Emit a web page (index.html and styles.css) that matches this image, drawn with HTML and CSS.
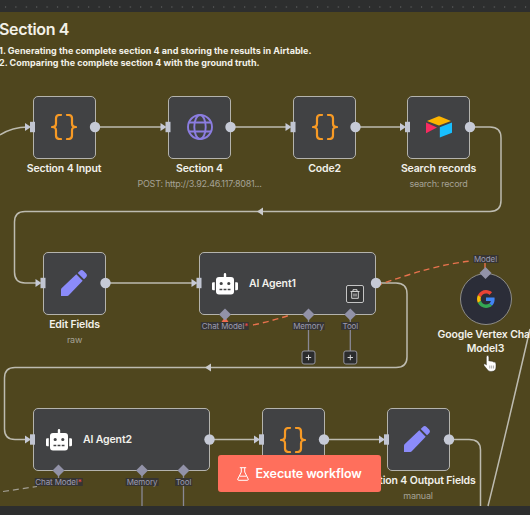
FILE: index.html
```html
<!DOCTYPE html>
<html lang="en">
<head>
<meta charset="utf-8">
<title>Workflow canvas</title>
<link rel="stylesheet" href="styles.css">
</head>
<body>
<svg class="defs" width="0" height="0" aria-hidden="true">
  <defs>
    <symbol id="braces" viewBox="0 0 26 26"><path d="M10 1H8.500Q5 1 5 4.500V9.500Q5 13 1 13Q5 13 5 16.500V21.500Q5 25 8.500 25H10M16 1H17.500Q21 1 21 4.500V9.500Q21 13 25 13Q21 13 21 16.500V21.500Q21 25 17.500 25H16" fill="none" stroke="#f79a25" stroke-width="2.200" stroke-linecap="round" stroke-linejoin="round"/></symbol>
    <symbol id="globe" viewBox="0 0 26 26"><g fill="none" stroke="#8b7de0" stroke-width="1.900"><circle cx="13" cy="13" r="12"/><ellipse cx="13" cy="13" rx="5.700" ry="12"/><path d="M2 8.500H24M2 17.500H24"/></g></symbol>
    <symbol id="pencil" viewBox="0 0 26 26"><path fill="#8b8bfa" d="M0 26V19.800Q0 18.800.8 18L15.300 4.300 21.700 10.700 8 25.100Q7.200 26 6.200 26ZM16.700 3 18.800.9Q20.700-.8 22.600.9L25.100 3.400Q26.800 5.300 25.100 7.200L23 9.300Z"/></symbol>
    <symbol id="robot" viewBox="0 0 26 22"><path fill="#fff" fill-rule="evenodd" d="M13 0Q14.200 0 14.200 1.200V4H19Q22 4 22 7V18.500Q22 21.500 19 21.500H7Q4 21.500 4 18.500V7Q4 4 7 4H11.800V1.200Q11.800 0 13 0ZM7.600 10.500a1.600 1.600 0 1 0 3.200 0a1.600 1.600 0 1 0-3.200 0M15.200 10.500a1.600 1.600 0 1 0 3.200 0a1.600 1.600 0 1 0-3.200 0M7.500 15.800V17.200H10.300V15.800ZM11.600 15.800V17.200H14.400V15.800ZM15.700 15.800V17.200H18.500V15.800ZM2.800 9.300V17.300H1.300Q0 17.300 0 16V10.600Q0 9.300 1.300 9.300ZM23.200 9.300H24.700Q26 9.300 26 10.600V16Q26 17.300 24.700 17.300H23.200Z"/></symbol>
    <symbol id="airtable" viewBox="0 0 26 22"><path fill="#fcb400" d="M1 4.900 12 .5Q13 .1 14 .5L25 4.900 13.800 9.300Q13 9.600 12.200 9.300Z"/><path fill="#18bfff" d="M13.800 11.200 26 6.500V16.800L13.800 21.600Z"/><path fill="#f82b60" d="M0 6.500 11 11.600 0 17.200Z"/></symbol>
    <symbol id="google" viewBox="0 0 48 48"><path fill="#ea4335" d="M24 9.500c3.540 0 6.710 1.220 9.210 3.600l6.850-6.850C35.900 2.380 30.470 0 24 0 14.620 0 6.510 5.380 2.560 13.220l7.980 6.190C12.430 13.720 17.740 9.500 24 9.500z"/><path fill="#4285f4" d="M46.980 24.550c0-1.570-.15-3.090-.38-4.550H24v9.020h12.940c-.58 2.960-2.260 5.480-4.780 7.180l7.730 6c4.510-4.180 7.090-10.360 7.090-17.650z"/><path fill="#fbbc05" d="M10.530 28.590c-.48-1.450-.76-2.990-.76-4.590s.27-3.140.76-4.590l-7.980-6.190C.92 16.460 0 20.120 0 24c0 3.880.92 7.540 2.560 10.780l7.970-6.190z"/><path fill="#34a853" d="M24 48c6.480 0 11.930-2.130 15.890-5.810l-7.730-6c-2.150 1.450-4.920 2.300-8.160 2.300-6.260 0-11.570-4.220-13.470-9.910l-7.980 6.190C6.510 42.620 14.620 48 24 48z"/></symbol>
    <g id="in"><path d="M-8-4 -2 0-8 4Z" fill="#c6c9d6"/><rect x="-3" y="-5.200" width="5" height="10.400" fill="#c1c5d2"/></g>
    <circle id="out" r="5.200" fill="#c6cad6"/>
    <path id="dia" d="M0-6 6 0 0 6-6 0Z" fill="#9292a8"/>
    <g id="plus"><rect x="-6.500" y="-6.500" width="13" height="13" rx="2" fill="#2b2c2d" stroke="#94949e"/><path d="M-2.700 0H2.700M0-2.700V2.700" stroke="#d5d5d5"/></g>
    <pattern id="dots" x="4" y="0" width="10.400" height="14" patternUnits="userSpaceOnUse"><rect x="1" y="6" width="1" height="2" fill="#505151"/></pattern>
  </defs>
</svg>
<main class="canvas">
  <svg class="grid" width="530" height="12"><rect width="530" height="12" fill="url(#dots)"/></svg>
  <section class="sticky">
    <h1>Section 4</h1>
    <p>1. Generating the complete section 4 and storing the results in Airtable.</p>
    <p>2. Comparing the complete section 4 with the ground truth.</p>
  </section>

  <svg class="layer" viewBox="0 0 530 515">
    <g class="wire">
      <path d="M0 135Q12 127 28 127M95 127H163M230 127H288M355 127H402"/>
      <path d="M469 127H490Q501 127 501 138V200.500Q501 211.500 490 211.500H25Q14.500 211.500 14.500 222V272Q14.500 283 25 283H38"/>
      <path d="M105 283H194M376 283H396Q407 283 407 294V357Q407 367.500 396 367.500H15Q4.500 367.500 4.500 378V429Q4.500 439.500 15 439.500H28"/>
      <path d="M209 439.500H256M324 439.500H382M449 439.500H469Q480.500 439.500 480.500 450V506M530 329C517 385 502 450 488 506"/>
    </g>
    <path d="M257 211.500 263 207.500V215.500ZM205 367.500 211 363.500V371.500Z" fill="#c9c9ca"/>
    <path class="model-wire" d="M253 325Q272 321 290 315M376 286Q432 265 471 261M485 262V270"/>
    <path class="idle-wire" d="M3 491.500Q20 489 37 486.500"/>
    <path class="stem" d="M308.500 314V351M350.300 314V351M142 471V506M183.500 471V506M58.500 471V484"/>
    <path d="M221.500 322 225 317 228.500 322Z" fill="#f36b50"/>
  </svg>

  <article class="node n-input"><div class="box"><svg class="icon"><use href="#braces"/></svg></div><b>Section 4 Input</b></article>
  <article class="node n-http"><div class="box"><svg class="icon"><use href="#globe"/></svg></div><b>Section 4</b><small>POST: http://3.92.46.117:8081...</small></article>
  <article class="node n-code2"><div class="box"><svg class="icon"><use href="#braces"/></svg></div><b>Code2</b></article>
  <article class="node n-search"><div class="box"><svg class="icon short"><use href="#airtable"/></svg></div><b>Search records</b><small>search: record</small></article>
  <article class="node n-edit"><div class="box"><svg class="icon"><use href="#pencil"/></svg></div><b>Edit Fields</b><small>raw</small></article>
  <article class="node agent n-agent1"><div class="box"><svg class="icon short"><use href="#robot"/></svg><b>AI Agent1</b></div>
    <span class="trash"><svg width="10" height="10" viewBox="0 0 10 10" fill="none" stroke="#d2d2d2"><path d="M.5 2.500H9.500M3 2.500V.7H7V2.500M1.700 2.500V9.300H8.300V2.500M4 4.500V7.500M6 4.500V7.500"/></svg></span></article>
  <article class="node agent n-agent2"><div class="box"><svg class="icon short"><use href="#robot"/></svg><b>AI Agent2</b></div></article>
  <article class="node n-code3"><div class="box"><svg class="icon"><use href="#braces"/></svg></div></article>
  <article class="node n-output"><div class="box"><svg class="icon"><use href="#pencil"/></svg></div><b>Section 4 Output Fields</b><small>manual</small></article>
  <article class="node n-model"><div class="disc"><svg width="18" height="18"><use href="#google"/></svg></div><b>Google Vertex Chat<br>Model3</b></article>

  <span class="tag t-chat1">Chat Model<i>*</i></span>
  <span class="tag t-mem1">Memory</span>
  <span class="tag t-tool1">Tool</span>
  <span class="tag t-chat2">Chat Model<i>*</i></span>
  <span class="tag t-mem2">Memory</span>
  <span class="tag t-tool2">Tool</span>
  <span class="tag t-model">Model</span>

  <svg class="layer" viewBox="0 0 530 515">
    <use href="#in" x="33" y="127"/><use href="#out" x="95" y="127"/>
    <use href="#in" x="168.500" y="127"/><use href="#out" x="230.500" y="127"/>
    <use href="#in" x="293.500" y="127"/><use href="#out" x="355.500" y="127"/>
    <use href="#in" x="408" y="127"/><use href="#out" x="470" y="127"/>
    <use href="#in" x="43.500" y="283"/><use href="#out" x="105.500" y="283"/>
    <use href="#in" x="199.500" y="283"/><use href="#out" x="376" y="283"/>
    <use href="#in" x="33" y="439.500"/><use href="#out" x="209.500" y="439.500"/>
    <use href="#in" x="262" y="439.500"/><use href="#out" x="324" y="439.500"/>
    <use href="#in" x="387" y="439.500"/><use href="#out" x="449" y="439.500"/>
    <use href="#dia" x="225" y="314.500"/><use href="#dia" x="308.500" y="314.500"/><use href="#dia" x="350.300" y="314.500"/>
    <use href="#dia" x="58.500" y="470.500"/><use href="#dia" x="142" y="470.500"/><use href="#dia" x="183.500" y="470.500"/>
    <use href="#dia" x="485.500" y="273"/>
    <use href="#plus" x="308.500" y="357.500"/><use href="#plus" x="350.300" y="357.500"/>
  </svg>

  <button class="execute"><svg width="12" height="14" viewBox="0 0 12 14" fill="none" stroke="#fff" stroke-linejoin="round"><path d="M2.800.7H9.200M4.300.7V5L.8 12Q.5 13.300 1.500 13.300H10.500Q11.500 13.300 11.200 12L7.700 5V.7M2.600 9.200H9.400"/></svg>Execute workflow</button>

  <svg class="cursor" width="14" height="17" viewBox="0 0 14 17"><path d="M3.300 10V2Q3.300.6 4.600.6T5.900 2V6Q7 5.300 8 6.300 9.200 5.700 10.200 6.900 13 6.500 13 9V12Q13 16.400 8.800 16.400H7.200Q5.400 16.400 4 14.200L1 10.500Q.4 9.300 1.200 8.900 2.200 8.500 3.300 10Z" fill="#fff" stroke="#2a2717" stroke-width=".5"/><path d="M6.800 10.500V13.500M8.700 10.500V13.500M10.600 10.500V13.500" stroke="#555" stroke-width=".5"/></svg>
</main>
</body>
</html>
```
FILE: styles.css
```css
* { box-sizing: border-box; }
body { margin: 0; font-family: Inter, sans-serif; }
.defs { position: absolute; }
.canvas {
  position: relative;
  width: 530px;
  height: 515px;
  padding-top: 12px;
  overflow: hidden;
  background: #2d2e2e;
}
.grid { position: absolute; left: 0; top: 0; }
.sticky {
  height: 494px;
  padding-top: 7px;
  background: #4f461e;
  color: #f3f1e8;
  white-space: nowrap;
}
.sticky h1 { margin: 0 0 6px -1px; font-size: 16px; line-height: 20px; font-weight: 600; letter-spacing: -0.35px; }
.sticky p { margin: 0 0 0 -1px; font-size: 9px; line-height: 12px; font-weight: 700; letter-spacing: 0.015px; }

.layer { position: absolute; left: 0; top: 0; width: 530px; height: 515px; }
.wire { fill: none; stroke: #bdbbb0; stroke-width: 1.5; }
.stem { fill: none; stroke: #898895; stroke-width: 1.3; }
.model-wire { fill: none; stroke: #e7724d; stroke-width: 1.4; stroke-dasharray: 6 4; }
.idle-wire { fill: none; stroke: #a19d91; stroke-width: 1.2; stroke-dasharray: 6 4; }

.node {
  position: absolute;
  display: flex;
  flex-direction: column;
  align-items: center;
  width: 63px;
  color: #f2f1eb;
  white-space: nowrap;
}
.box {
  display: flex;
  align-items: center;
  justify-content: center;
  flex: none;
  width: 63px;
  height: 63px;
  border: 1.5px solid #b4b3ad;
  border-radius: 5px;
  background: #414244;
}
.icon { width: 26px; height: 26px; }
.icon.short { height: 22px; }
.node b { font-size: 10.5px; line-height: 14px; font-weight: 600; letter-spacing: -0.14px; }
.node > b { margin-top: 3px; }
.node small { margin-top: 1px; font-size: 9px; line-height: 13px; letter-spacing: -0.25px; color: #a5a295; }
.agent, .agent .box { width: 177px; }
.agent .box { justify-content: flex-start; gap: 11px; padding-left: 12px; }
.disc {
  display: flex;
  align-items: center;
  justify-content: center;
  width: 52px;
  height: 52px;
  border: 1px solid #8d8c88;
  border-radius: 50%;
  background: #2b2d38;
}
.trash {
  position: absolute;
  right: 12px;
  top: 33px;
  display: flex;
  align-items: center;
  justify-content: center;
  width: 18px;
  height: 18px;
  border: 1px solid #c4c4c4;
  border-radius: 2px;
  background: #343536;
}

.n-input { left: 32.5px; top: 95.5px; }
.n-http { left: 168px; top: 95.5px; }
.n-code2 { left: 293px; top: 95.5px; }
.n-search { left: 407px; top: 95.5px; }
.n-edit { left: 43px; top: 252px; }
.n-agent1 { left: 199px; top: 252px; }
.n-agent2 { left: 33px; top: 408px; }
.n-code3 { left: 261.5px; top: 408px; }
.n-output { left: 386.5px; top: 408px; }
.n-model { left: 454px; top: 273px; }
.n-model b { text-align: center; }
.n-edit .icon, .n-output .icon { margin: 0 2px 1px 0; }

.tag {
  position: absolute;
  transform: translateX(-50%);
  padding: 0 1px;
  background: #363432;
  color: #9c9bb0;
  font-size: 8px;
  line-height: 8px;
  letter-spacing: -0.1px;
  white-space: nowrap;
}
.tag i { color: #ef4b4b; font-style: normal; }
.t-chat1 { left: 225px; top: 322px; }
.t-mem1 { left: 308.5px; top: 322px; }
.t-tool1 { left: 350.3px; top: 322px; }
.t-chat2 { left: 58.5px; top: 478px; }
.t-mem2 { left: 142px; top: 478px; }
.t-tool2 { left: 183.5px; top: 478px; }
.t-model { left: 485.5px; top: 255px; }

.execute {
  position: absolute;
  left: 218px;
  top: 455px;
  display: flex;
  align-items: center;
  justify-content: center;
  gap: 6px;
  width: 163px;
  height: 37px;
  padding: 0;
  border: 0;
  border-radius: 3px;
  background: #ff6f5c;
  color: #fff;
  font: 600 12.5px Inter, sans-serif;
  letter-spacing: -0.1px;
  white-space: nowrap;
}
.cursor { position: absolute; left: 483px; top: 355px; }
```
